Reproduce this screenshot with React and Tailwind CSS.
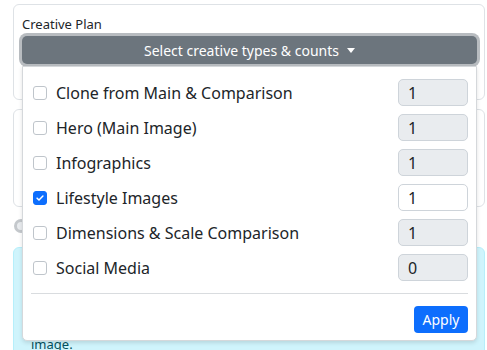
import React, { useState } from 'react';

const TYPES = [
  { label: 'Clone from Main & Comparison', count: 1, checked: false },
  { label: 'Hero (Main Image)', count: 1, checked: false },
  { label: 'Infographics', count: 1, checked: false },
  { label: 'Lifestyle Images', count: 1, checked: true },
  { label: 'Dimensions & Scale Comparison', count: 1, checked: false },
  { label: 'Social Media', count: 0, checked: false },
];

function Check({ checked }) {
  if (checked) {
    return (
      <span className="w-[14px] h-[14px] rounded-[3px] bg-[#0d6efd] border border-[#0d6efd] flex items-center justify-center shrink-0">
        <svg viewBox="0 0 12 12" className="w-[10px] h-[10px]">
          <path d="M2.5 6.2l2.3 2.3 4.7-4.8" fill="none" stroke="#fff" strokeWidth="1.8" strokeLinecap="round" strokeLinejoin="round" />
        </svg>
      </span>
    );
  }
  return <span className="block w-[14px] h-[14px] rounded-[3px] bg-white border border-[#bfc5cb] shrink-0" />;
}

export default function App() {
  const [rows] = useState(TYPES);

  return (
    <div className="w-[487px] h-[350px] overflow-hidden bg-white text-[#212529] font-['Noto_Sans','Open_Sans',sans-serif]">
      <div className="pl-[13px] pr-[2px] pt-[4px]">
        {/* Creative plan card */}
        <div className="h-[96px] border border-[#dee2e6] rounded-[6px] px-[8px] pt-[10px]">
          <div className="text-[13px] leading-[18px]">Creative Plan</div>
          <div className="relative mt-[3px]">
            <button
              type="button"
              className="w-[455px] h-[28px] rounded-[5px] bg-[#6c757d] text-white text-[14px] flex items-center justify-center gap-[8px] ring-[3px] ring-[#b8bcc0]"
            >
              <span>Select creative types &amp; counts</span>
              <svg viewBox="0 0 10 6" className="w-[8px] h-[5px]">
                <path d="M0 0h10L5 6z" fill="#fff" />
              </svg>
            </button>
            <div className="w-[4px] h-[9px] bg-[#0d6efd] mt-[14px]" />

            {/* dropdown menu */}
            <div className="absolute left-0 top-[30px] w-[455px] bg-white border border-[#d5d8db] rounded-b-[5px] shadow-[0_2px_4px_rgba(0,0,0,0.12)] z-10 px-[8px] pt-[8px] pb-[7px]">
              {rows.map((r) => (
                <div key={r.label} className="h-[35px] flex items-center">
                  <div className="pl-[2px]">
                    <Check checked={r.checked} />
                  </div>
                  <span className="ml-[9px] text-[16px] leading-[20px] flex-1">{r.label}</span>
                  <div
                    className={
                      'w-[70px] h-[27px] rounded-[5px] border border-[#ced4da] text-[16px] pl-[9px] flex items-center ' +
                      (r.checked ? 'bg-white' : 'bg-[#e9ecef]')
                    }
                  >
                    {r.count}
                  </div>
                </div>
              ))}
              <div className="h-px bg-[#d9dcdf] mt-[8px]" />
              <div className="flex justify-end mt-[12px]">
                <button type="button" className="w-[54px] h-[27px] rounded-[4px] bg-[#0d6efd] text-white text-[14px]">
                  Apply
                </button>
              </div>
            </div>
          </div>
        </div>

        {/* second card, mostly hidden */}
        <div className="h-[98px] mt-[9px] border border-[#dee2e6] rounded-[6px] px-[8px] pt-[17px]">
          <div className="w-[4px] h-[8px] bg-[#fd7e14]" />
          <div className="w-[454px] h-[24px] bg-[#495057] mt-[10px] rounded-[4px]" />
        </div>

        <div className="mt-[12px] flex items-center">
          <span className="block w-[14px] h-[14px] rounded-full border-[3px] border-[#c4c8cc] bg-[#e9ecef] ml-[1px]" />
        </div>

        <div className="mt-[14px] h-[110px] bg-[#cff4fc] border border-[#b6effb] rounded-[6px] px-[17px] pt-[86px] text-[#055160] text-[13px] leading-[20px]">
          image.
        </div>
      </div>
    </div>
  );
}
